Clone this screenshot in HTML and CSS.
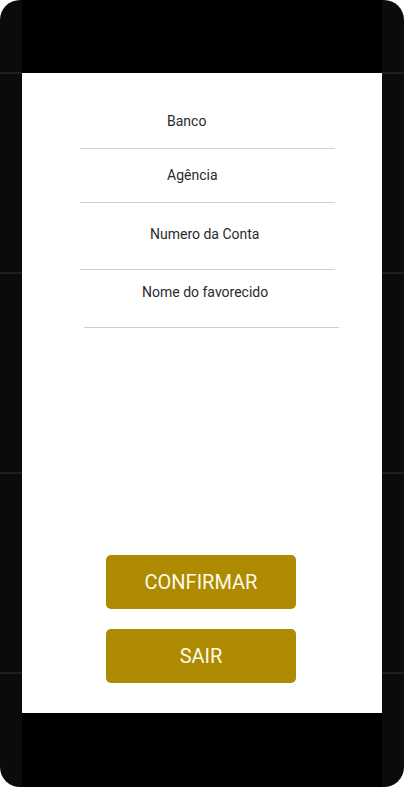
FILE: index.html
```html
<!DOCTYPE html>
<html lang="pt">
<head>
<meta charset="utf-8">
<title>Transferência</title>
<link rel="stylesheet" href="styles.css">
</head>
<body>
<div class="device">
  <div class="side"></div>
  <div class="screen">
    <div class="bar"></div>
    <main class="content">
      <div class="form">
        <div class="field field-banco">Banco</div>
        <div class="field field-agencia">Agência</div>
        <div class="field field-conta">Numero da Conta</div>
        <div class="field field-nome">Nome do favorecido</div>
      </div>
      <div class="actions">
        <button class="btn">CONFIRMAR</button>
        <button class="btn">SAIR</button>
      </div>
    </main>
    <div class="bar bar-bottom"></div>
  </div>
  <div class="side"></div>
</div>
</body>
</html>
```

FILE: styles.css
```css
html, body {
  margin: 0;
  padding: 0;
  background: #ffffff;
}

*, *::before, *::after {
  box-sizing: border-box;
}

.device {
  width: 404px;
  height: 787px;
  display: flex;
  background: #0b0b0b;
  border-radius: 20px;
  overflow: hidden;
}

.side {
  width: 22px;
  flex: none;
  background:
    repeating-linear-gradient(to bottom,
      transparent 0, transparent 72px,
      #1f1f1f 72px, #1f1f1f 74px,
      transparent 74px, transparent 200px);
}

.screen {
  width: 360px;
  flex: none;
  display: flex;
  flex-direction: column;
  background: #000000;
}

.bar {
  height: 73px;
  flex: none;
  background: #000000;
}

.bar-bottom {
  height: 74px;
}

.content {
  height: 640px;
  flex: none;
  background: #ffffff;
  display: flex;
  flex-direction: column;
  font-family: Roboto, "Liberation Sans", sans-serif;
}

.form {
  display: flex;
  flex-direction: column;
  padding-left: 58px;
}

.field {
  width: 255px;
  font-size: 14px;
  line-height: 16px;
  color: #2a2a2a;
  border-bottom: 1px solid #cfcfcf;
}

.field-banco {
  padding: 40px 0 19px 87px;
}

.field-agencia {
  padding: 18px 0 19px 87px;
}

.field-conta {
  padding: 23px 0 27px 70px;
}

.field-nome {
  margin-left: 4px;
  padding: 14px 0 27px 58px;
}

.actions {
  margin-top: auto;
  padding: 0 0 30px 84px;
  display: flex;
  flex-direction: column;
  gap: 20px;
}

.btn {
  width: 190px;
  height: 54px;
  border: none;
  border-radius: 5px;
  background: #ad8a00;
  color: #fdf9e6;
  font-family: Roboto, "Liberation Sans", sans-serif;
  font-size: 20px;
  padding: 0;
}
```
